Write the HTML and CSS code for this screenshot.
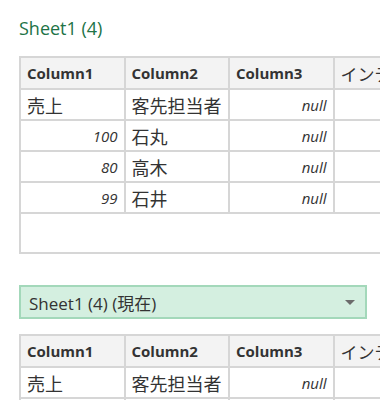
FILE: index.html
```html
<!DOCTYPE html>
<html lang="ja">

<head>
    <meta charset="UTF-8">
    <title>Sheet1 (4)</title>
    <link rel="stylesheet" href="styles.css">
</head>

<body>
    <div class="page">
        <h2 class="sheet-title">Sheet1 (4)</h2>

        <div class="grid-wrap">
            <table class="grid">
                <tr>
                    <th>Column1</th>
                    <th>Column2</th>
                    <th>Column3</th>
                    <th class="jp">インデックス</th>
                </tr>
                <tr>
                    <td>売上</td>
                    <td>客先担当者</td>
                    <td class="num">null</td>
                    <td></td>
                </tr>
                <tr>
                    <td class="num">100</td>
                    <td>石丸</td>
                    <td class="num">null</td>
                    <td></td>
                </tr>
                <tr>
                    <td class="num">80</td>
                    <td>高木</td>
                    <td class="num">null</td>
                    <td></td>
                </tr>
                <tr>
                    <td class="num">99</td>
                    <td>石井</td>
                    <td class="num">null</td>
                    <td></td>
                </tr>
            </table>
            <div class="grid-empty"></div>
        </div>

        <div class="picker">
            <span>Sheet1 (4) (現在)</span>
            <span class="picker-arrow"></span>
        </div>

        <div class="grid-wrap">
            <table class="grid">
                <tr>
                    <th>Column1</th>
                    <th>Column2</th>
                    <th>Column3</th>
                    <th class="jp">インデックス</th>
                </tr>
                <tr>
                    <td>売上</td>
                    <td>客先担当者</td>
                    <td class="num">null</td>
                    <td></td>
                </tr>
                <tr>
                    <td class="num">100</td>
                    <td>石丸</td>
                    <td class="num">null</td>
                    <td></td>
                </tr>
            </table>
        </div>
    </div>
</body>

</html>
```

FILE: styles.css
```css
* {
    margin: 0;
    padding: 0;
    box-sizing: border-box;
}

body {
    font-family: "Open Sans", "Noto Sans CJK JP", sans-serif;
    color: #333;
    background-color: #fff;
    overflow: hidden;
}

.page {
    padding: 17px 0 0 19px;
    width: 380px;
}

.sheet-title {
    font-size: 18px;
    font-weight: normal;
    color: #217346;
    line-height: 22px;
    margin-bottom: 17px;
}

.grid-wrap {
    width: 420px;
    border-left: 2px solid #d6d6d6;
}

.grid {
    border-collapse: collapse;
    table-layout: fixed;
    width: 420px;
    margin-left: -2px;
}

.grid th,
.grid td {
    border: 2px solid #d6d6d6;
    height: 31px;
    padding: 0 6px;
    text-align: left;
    white-space: nowrap;
    overflow: hidden;
    width: 104px;
}

.grid th {
    background-color: #f3f3f3;
    font-size: 15px;
    font-weight: bold;
    height: 32px;
}

.grid th.jp {
    font-weight: normal;
    font-size: 17px;
}

.grid td {
    font-size: 18px;
}

.grid td.num {
    text-align: right;
    font-style: italic;
    font-size: 15px;
}

.grid-empty {
    height: 40px;
    border-bottom: 2px solid #d6d6d6;
}

.picker {
    display: flex;
    align-items: center;
    justify-content: space-between;
    width: 348px;
    height: 34px;
    margin: 31px 0 15px;
    padding: 0 10px 0 8px;
    background-color: #d4efe0;
    border: 2px solid #a3d8ba;
    font-size: 17px;
}

.picker-arrow {
    width: 0;
    height: 0;
    border-left: 5px solid transparent;
    border-right: 5px solid transparent;
    border-top: 5px solid #6b6b6b;
}
```
